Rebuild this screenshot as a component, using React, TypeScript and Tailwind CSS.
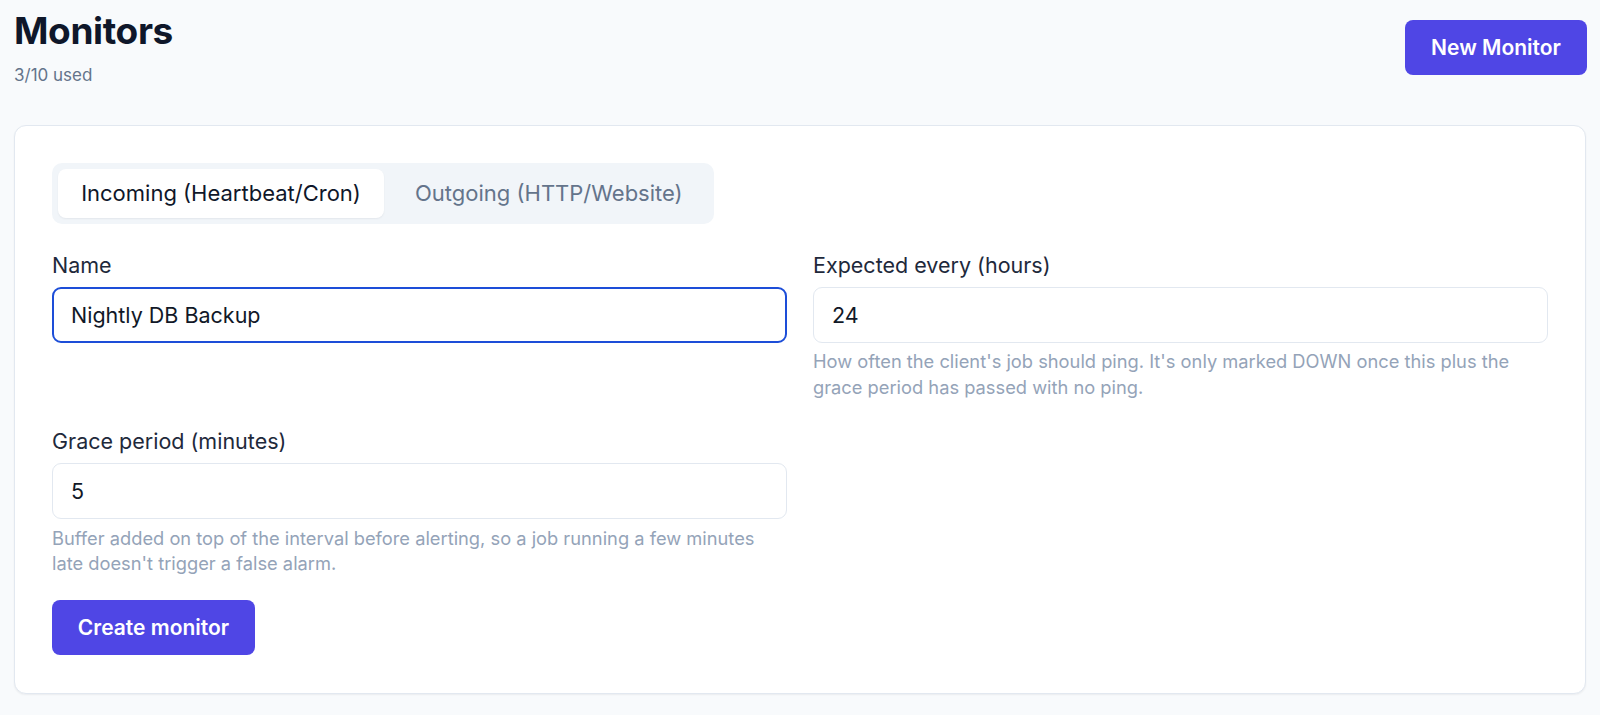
export default function App() {
  const font = { fontFamily: "Inter, 'Noto Sans', sans-serif" };
  return (
    <div style={font} className="min-h-[715px] w-full bg-[#f8fafc] px-[14px] pt-[9px] pb-[22px] text-[#0f172a]">
      <header className="flex items-start justify-between">
        <div>
          <h1 className="text-[37px] font-bold leading-[44px] tracking-[-0.01em] text-[#0f172a]">Monitors</h1>
          <p className="mt-[9px] text-[17px] leading-[26px] text-[#64748b]">3/10 used</p>
        </div>
        <button className="mt-[11px] mr-[-1px] h-[55px] w-[182px] rounded-[8px] bg-[#4f46e5] text-[21px] font-semibold text-white">
          New Monitor
        </button>
      </header>

      <section className="mt-[37px] rounded-[12px] border border-[#e2e8f0] bg-white px-[37px] pt-[37px] pb-[38px] shadow-[0_1px_2px_rgba(15,23,42,0.06)]">
        <div className="inline-flex h-[61px] items-center gap-[6px] rounded-[10px] bg-[#f1f5f9] p-[6px]">
          <button className="h-[49px] w-[326px] rounded-[8px] bg-white text-[22px] font-normal text-[#0f172a] shadow-[0_1px_2px_rgba(15,23,42,0.06)]">
            Incoming (Heartbeat/Cron)
          </button>
          <button className="h-[49px] pl-[25px] pr-[25px] text-[22px] font-normal text-[#64748b]">
            Outgoing (HTTP/Website)
          </button>
        </div>

        <div className="mt-[27px] grid grid-cols-2 gap-x-[26px] gap-y-[27px]">
          <div>
            <label className="block text-[21.5px] leading-[28px] text-[#1e293b]">Name</label>
            <input
              readOnly
              value="Nightly DB Backup"
              className="mt-[8px] h-[56px] w-full rounded-[9px] border-2 border-[#1d4ed8] bg-white px-[17px] text-[21.5px] text-[#111827] outline-none"
            />
          </div>
          <div>
            <label className="block text-[21.5px] leading-[28px] text-[#1e293b]">Expected every (hours)</label>
            <input
              readOnly
              value="24"
              className="mt-[8px] h-[56px] w-full rounded-[9px] border border-[#e2e8f0] bg-white px-[18px] text-[21.5px] text-[#111827] outline-none"
            />
            <p className="mt-[5px] text-[18.3px] leading-[26px] text-[#94a3b8]">
              How often the client's job should ping. It's only marked DOWN once this plus the grace period has passed with no ping.
            </p>
          </div>
          <div>
            <label className="block text-[21.5px] leading-[28px] text-[#1e293b]">Grace period (minutes)</label>
            <input
              readOnly
              value="5"
              className="mt-[8px] h-[56px] w-full rounded-[9px] border border-[#e2e8f0] bg-white px-[18px] text-[21.5px] text-[#111827] outline-none"
            />
            <p className="mt-[7px] text-[18.3px] leading-[25px] text-[#94a3b8]">
              Buffer added on top of the interval before alerting, so a job running a few minutes late doesn't trigger a false alarm.
            </p>
          </div>
        </div>

        <button className="mt-[24px] h-[55px] w-[203px] rounded-[8px] bg-[#4f46e5] text-[21px] font-semibold text-white">
          Create monitor
        </button>
      </section>
    </div>
  );
}
